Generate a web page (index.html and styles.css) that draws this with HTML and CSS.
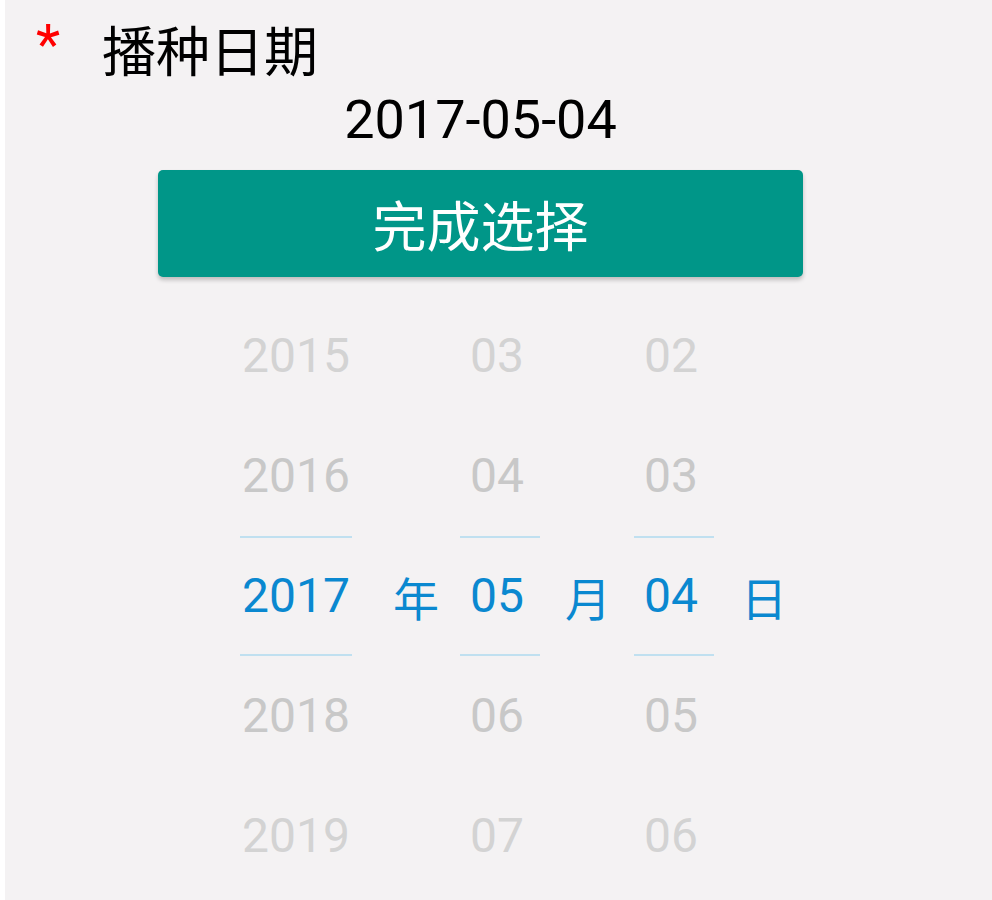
FILE: index.html
```html
<!DOCTYPE html>
<html lang="zh">
<head>
<meta charset="utf-8">
<title>播种日期</title>
<link rel="stylesheet" href="styles.css">
</head>
<body>
<div class="screen">
  <div class="field-head">
    <span class="required">*</span>
    <span class="field-label">播种日期</span>
  </div>
  <div class="center-col">
    <div class="date-value">2017-05-04</div>
    <button class="done-btn" type="button">完成选择</button>
  </div>
  <div class="picker">
    <div class="wheel wheel-year">
      <div class="item far">2015</div>
      <div class="item near">2016</div>
      <div class="item selected">2017</div>
      <div class="item near">2018</div>
      <div class="item far">2019</div>
    </div>
    <div class="unit unit-year">年</div>
    <div class="wheel wheel-month">
      <div class="item far">03</div>
      <div class="item near">04</div>
      <div class="item selected">05</div>
      <div class="item near">06</div>
      <div class="item far">07</div>
    </div>
    <div class="unit unit-month">月</div>
    <div class="wheel wheel-day">
      <div class="item far">02</div>
      <div class="item near">03</div>
      <div class="item selected">04</div>
      <div class="item near">05</div>
      <div class="item far">06</div>
    </div>
    <div class="unit unit-day">日</div>
  </div>
</div>
</body>
</html>
```

FILE: styles.css
```css
* { box-sizing: border-box; }
html, body {
  margin: 0;
  padding: 0;
  background: #ffffff;
  height: 100%;
}
body {
  font-family: Roboto, "Noto Sans CJK SC", sans-serif;
  overflow: hidden;
}
.screen {
  margin-left: 5px;
  height: 900px;
  background: #f4f2f3;
}
.field-head {
  display: flex;
  align-items: center;
  height: 98px;
  padding-left: 31px;
}
.required {
  color: #ff0000;
  font-family: Roboto, sans-serif;
  font-size: 56px;
  line-height: 98px;
  width: 66px;
  position: relative;
  top: -4px;
}
.field-label {
  font-family: "Noto Sans CJK SC", sans-serif;
  font-size: 54px;
  line-height: 98px;
  color: #000000;
}
.center-col {
  width: 645px;
  margin-left: 153px;
  display: flex;
  flex-direction: column;
}
.date-value {
  height: 44px;
  line-height: 44px;
  text-align: center;
  font-family: Roboto, sans-serif;
  font-size: 54px;
  color: #000000;
}
.done-btn {
  margin-top: 28px;
  height: 107px;
  border: none;
  border-radius: 5px;
  background: #009688;
  color: #ffffff;
  font-family: "Noto Sans CJK SC", sans-serif;
  font-size: 54px;
  box-shadow: 0 3px 4px rgba(0, 0, 0, 0.22);
  padding: 0;
}
.picker {
  margin-top: 19px;
  margin-left: 235px;
  display: flex;
  height: 600px;
}
.wheel {
  display: flex;
  flex-direction: column;
}
.wheel-year { width: 112px; }
.wheel-month, .wheel-day { width: 80px; }
.wheel-month .item, .wheel-day .item { padding-right: 6px; }
.item {
  height: 120px;
  line-height: 120px;
  text-align: center;
  font-family: Roboto, sans-serif;
  font-size: 48px;
}
.item.far { color: #d3d3d3; }
.item.near { color: #c8c8c8; }
.item.selected {
  color: #0a88d0;
  border-top: 2px solid #c0e0f0;
  border-bottom: 2px solid #c0e0f0;
  line-height: 116px;
}
.unit {
  display: flex;
  align-items: center;
  justify-content: center;
  font-family: "Noto Sans CJK SC", sans-serif;
  font-size: 46px;
  color: #0a88d0;
}
.unit-year { width: 108px; padding-left: 20px; }
.unit-month { width: 94px; padding-left: 2px; }
.unit-day { width: 100px; }
```
